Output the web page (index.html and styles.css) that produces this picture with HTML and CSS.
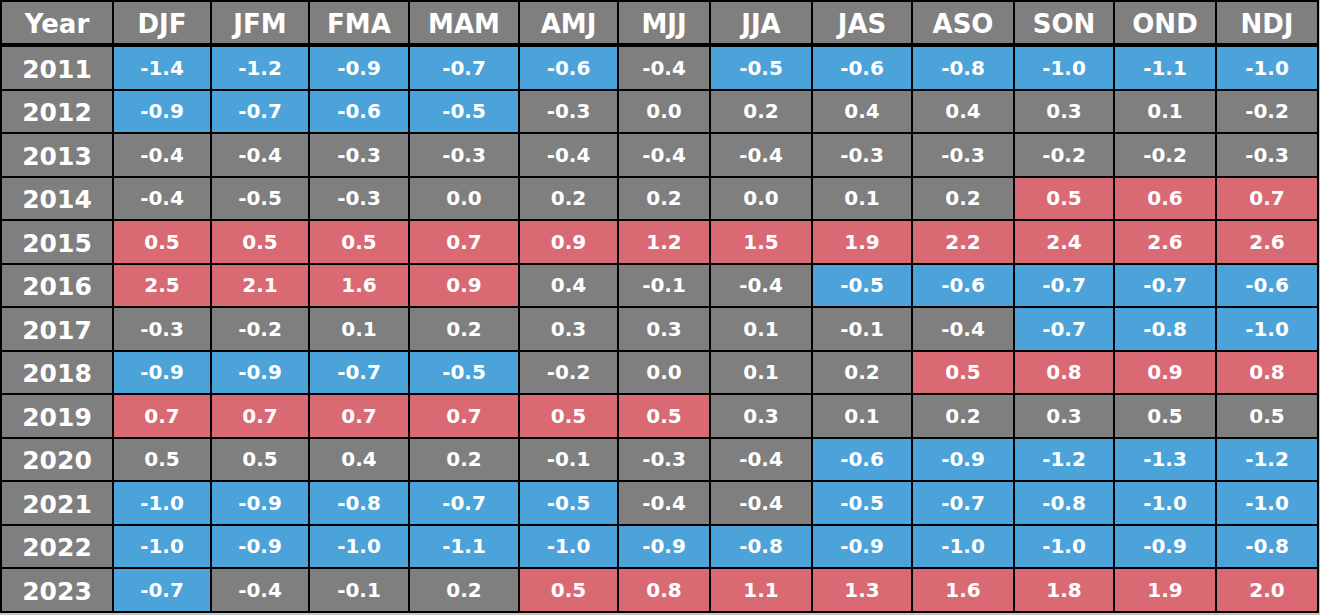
FILE: index.html
```html
<!DOCTYPE html>
<html>
<head>
<meta charset="utf-8">
<link rel="stylesheet" href="styles.css">
</head>
<body>
<table class="oni">
<colgroup>
<col class="c-year"><col class="w96"><col class="w96"><col class="w98"><col class="w108"><col class="w97"><col class="w90"><col class="w100"><col class="w98"><col class="w100"><col class="w98"><col class="w100"><col class="w100">
</colgroup>
<thead>
<tr><th>Year</th><th>DJF</th><th>JFM</th><th>FMA</th><th>MAM</th><th>AMJ</th><th>MJJ</th><th>JJA</th><th>JAS</th><th>ASO</th><th>SON</th><th>OND</th><th>NDJ</th></tr>
</thead>
<tbody>
<tr><td class="yr">2011</td><td class="b">-1.4</td><td class="b">-1.2</td><td class="b">-0.9</td><td class="b">-0.7</td><td class="b">-0.6</td><td class="g">-0.4</td><td class="b">-0.5</td><td class="b">-0.6</td><td class="b">-0.8</td><td class="b">-1.0</td><td class="b">-1.1</td><td class="b">-1.0</td></tr>
<tr><td class="yr">2012</td><td class="b">-0.9</td><td class="b">-0.7</td><td class="b">-0.6</td><td class="b">-0.5</td><td class="g">-0.3</td><td class="g">0.0</td><td class="g">0.2</td><td class="g">0.4</td><td class="g">0.4</td><td class="g">0.3</td><td class="g">0.1</td><td class="g">-0.2</td></tr>
<tr><td class="yr">2013</td><td class="g">-0.4</td><td class="g">-0.4</td><td class="g">-0.3</td><td class="g">-0.3</td><td class="g">-0.4</td><td class="g">-0.4</td><td class="g">-0.4</td><td class="g">-0.3</td><td class="g">-0.3</td><td class="g">-0.2</td><td class="g">-0.2</td><td class="g">-0.3</td></tr>
<tr><td class="yr">2014</td><td class="g">-0.4</td><td class="g">-0.5</td><td class="g">-0.3</td><td class="g">0.0</td><td class="g">0.2</td><td class="g">0.2</td><td class="g">0.0</td><td class="g">0.1</td><td class="g">0.2</td><td class="r">0.5</td><td class="r">0.6</td><td class="r">0.7</td></tr>
<tr><td class="yr">2015</td><td class="r">0.5</td><td class="r">0.5</td><td class="r">0.5</td><td class="r">0.7</td><td class="r">0.9</td><td class="r">1.2</td><td class="r">1.5</td><td class="r">1.9</td><td class="r">2.2</td><td class="r">2.4</td><td class="r">2.6</td><td class="r">2.6</td></tr>
<tr><td class="yr">2016</td><td class="r">2.5</td><td class="r">2.1</td><td class="r">1.6</td><td class="r">0.9</td><td class="g">0.4</td><td class="g">-0.1</td><td class="g">-0.4</td><td class="b">-0.5</td><td class="b">-0.6</td><td class="b">-0.7</td><td class="b">-0.7</td><td class="b">-0.6</td></tr>
<tr><td class="yr">2017</td><td class="g">-0.3</td><td class="g">-0.2</td><td class="g">0.1</td><td class="g">0.2</td><td class="g">0.3</td><td class="g">0.3</td><td class="g">0.1</td><td class="g">-0.1</td><td class="g">-0.4</td><td class="b">-0.7</td><td class="b">-0.8</td><td class="b">-1.0</td></tr>
<tr><td class="yr">2018</td><td class="b">-0.9</td><td class="b">-0.9</td><td class="b">-0.7</td><td class="b">-0.5</td><td class="g">-0.2</td><td class="g">0.0</td><td class="g">0.1</td><td class="g">0.2</td><td class="r">0.5</td><td class="r">0.8</td><td class="r">0.9</td><td class="r">0.8</td></tr>
<tr><td class="yr">2019</td><td class="r">0.7</td><td class="r">0.7</td><td class="r">0.7</td><td class="r">0.7</td><td class="r">0.5</td><td class="r">0.5</td><td class="g">0.3</td><td class="g">0.1</td><td class="g">0.2</td><td class="g">0.3</td><td class="g">0.5</td><td class="g">0.5</td></tr>
<tr><td class="yr">2020</td><td class="g">0.5</td><td class="g">0.5</td><td class="g">0.4</td><td class="g">0.2</td><td class="g">-0.1</td><td class="g">-0.3</td><td class="g">-0.4</td><td class="b">-0.6</td><td class="b">-0.9</td><td class="b">-1.2</td><td class="b">-1.3</td><td class="b">-1.2</td></tr>
<tr><td class="yr">2021</td><td class="b">-1.0</td><td class="b">-0.9</td><td class="b">-0.8</td><td class="b">-0.7</td><td class="b">-0.5</td><td class="g">-0.4</td><td class="g">-0.4</td><td class="b">-0.5</td><td class="b">-0.7</td><td class="b">-0.8</td><td class="b">-1.0</td><td class="b">-1.0</td></tr>
<tr><td class="yr">2022</td><td class="b">-1.0</td><td class="b">-0.9</td><td class="b">-1.0</td><td class="b">-1.1</td><td class="b">-1.0</td><td class="b">-0.9</td><td class="b">-0.8</td><td class="b">-0.9</td><td class="b">-1.0</td><td class="b">-1.0</td><td class="b">-0.9</td><td class="b">-0.8</td></tr>
<tr><td class="yr">2023</td><td class="b">-0.7</td><td class="g">-0.4</td><td class="g">-0.1</td><td class="g">0.2</td><td class="r">0.5</td><td class="r">0.8</td><td class="r">1.1</td><td class="r">1.3</td><td class="r">1.6</td><td class="r">1.8</td><td class="r">1.9</td><td class="r">2.0</td></tr>
</tbody>
</table>
</body>
</html>
```
FILE: styles.css
```css
html, body {
  margin: 0;
  padding: 0;
  background: #c4c4c4;
}

body {
  font-family: "DejaVu Sans", Verdana, sans-serif;
  font-weight: bold;
  color: #ffffff;
}

.oni {
  table-layout: fixed;
  width: 1319px;
  border-collapse: separate;
  border-spacing: 2px;
  background: #000000;
}

.c-year { width: 110px; }
.w90 { width: 90px; }
.w96 { width: 96px; }
.w97 { width: 97px; }
.w98 { width: 98px; }
.w100 { width: 100px; }
.w108 { width: 108px; }

.oni th,
.oni td {
  padding: 0;
  text-align: center;
  vertical-align: middle;
  background: #7f7f7f;
  box-sizing: border-box;
}

.oni th {
  height: 43px;
  font-size: 26px;
  border-bottom: 2px solid #000000;
  padding-top: 3px;
}

.oni td {
  height: 41.5px;
  font-size: 20px;
}

.oni td.yr {
  font-size: 25px;
  padding-top: 3px;
}

.oni td.b { background: #4ca3d9; }
.oni td.r { background: #d96a74; }
.oni td.g { background: #7f7f7f; }
```
